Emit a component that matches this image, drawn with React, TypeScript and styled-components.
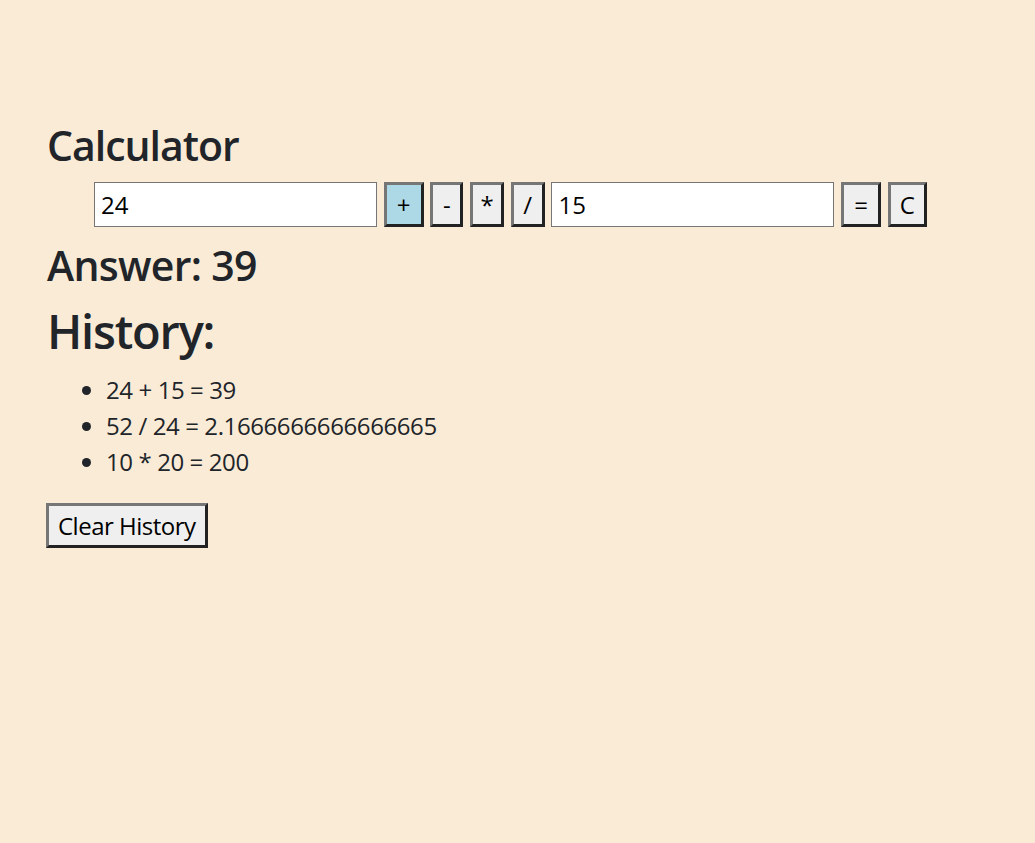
import React, { useState } from "react";
import styled, { createGlobalStyle } from "styled-components";

const GlobalStyle = createGlobalStyle`
  html, body {
    margin: 0;
    padding: 0;
    background: #faebd7;
  }
  body {
    font-family: "Open Sans", "Noto Sans", sans-serif;
    color: #212529;
    font-size: 24px;
    line-height: 1.5;
    min-height: 843px;
  }
  * { box-sizing: border-box; }
`;

const Page = styled.main`
  padding: 121px 0 0 47px;
`;

const Title = styled.h2`
  margin: 0;
  font-size: 41px;
  font-weight: 600;
  line-height: 49px;
  letter-spacing: -1px;
`;

const Row = styled.div`
  display: flex;
  align-items: center;
  gap: 6.7px;
  margin-top: 12px;
  padding-left: 47px;
  height: 45px;
`;

const NumInput = styled.input`
  width: 283px;
  height: 45px;
  border: 1px solid #767676;
  background: #fff;
  color: #000;
  font-family: inherit;
  font-size: 24px;
  padding: 0 6px;
  outline: none;
`;

const OpButton = styled.button<{ $active?: boolean; $w?: number }>`
  height: 45px;
  min-width: ${(p) => (p.$w ? `${p.$w}px` : "33px")};
  padding: 0 6px;
  font-family: inherit;
  font-size: 24px;
  line-height: 1;
  color: #000;
  background: ${(p) => (p.$active ? "#add8e6" : "#efefef")};
  border: 3px solid;
  border-color: #767676 #222 #222 #767676;
  cursor: pointer;
`;

const Answer = styled.h2`
  margin: 14px 0 0;
  font-size: 41px;
  font-weight: 600;
  line-height: 49px;
  letter-spacing: -0.7px;
`;

const HistoryTitle = styled.h1`
  margin: 12px 0 0;
  font-size: 47px;
  font-weight: 600;
  line-height: 58px;
  letter-spacing: -1.2px;
`;

const List = styled.ul`
  margin: 12px 0 0;
  padding-left: 59px;
`;

const Item = styled.li`
  line-height: 36px;
  letter-spacing: -0.4px;
`;

const ClearButton = styled(OpButton)`
  margin-top: 23px;
  margin-left: -1px;
  padding: 0 9px;
  letter-spacing: -0.5px;
`;

export default function App() {
  const [a, setA] = useState("24");
  const [b, setB] = useState("15");
  return (
    <>
      <GlobalStyle />
      <Page>
        <Title>Calculator</Title>
        <Row>
          <NumInput value={a} onChange={(e) => setA(e.target.value)} />
          <OpButton $active $w={40}>+</OpButton>
          <OpButton $w={33}>-</OpButton>
          <OpButton $w={34}>*</OpButton>
          <OpButton $w={34}>/</OpButton>
          <NumInput value={b} onChange={(e) => setB(e.target.value)} />
          <OpButton $w={40}>=</OpButton>
          <OpButton $w={39}>C</OpButton>
        </Row>
        <Answer>Answer: 39</Answer>
        <HistoryTitle>History:</HistoryTitle>
        <List>
          <Item>24 + 15 = 39</Item>
          <Item>52 / 24 = 2.1666666666666665</Item>
          <Item>10 * 20 = 200</Item>
        </List>
        <ClearButton>Clear History</ClearButton>
      </Page>
    </>
  );
}
